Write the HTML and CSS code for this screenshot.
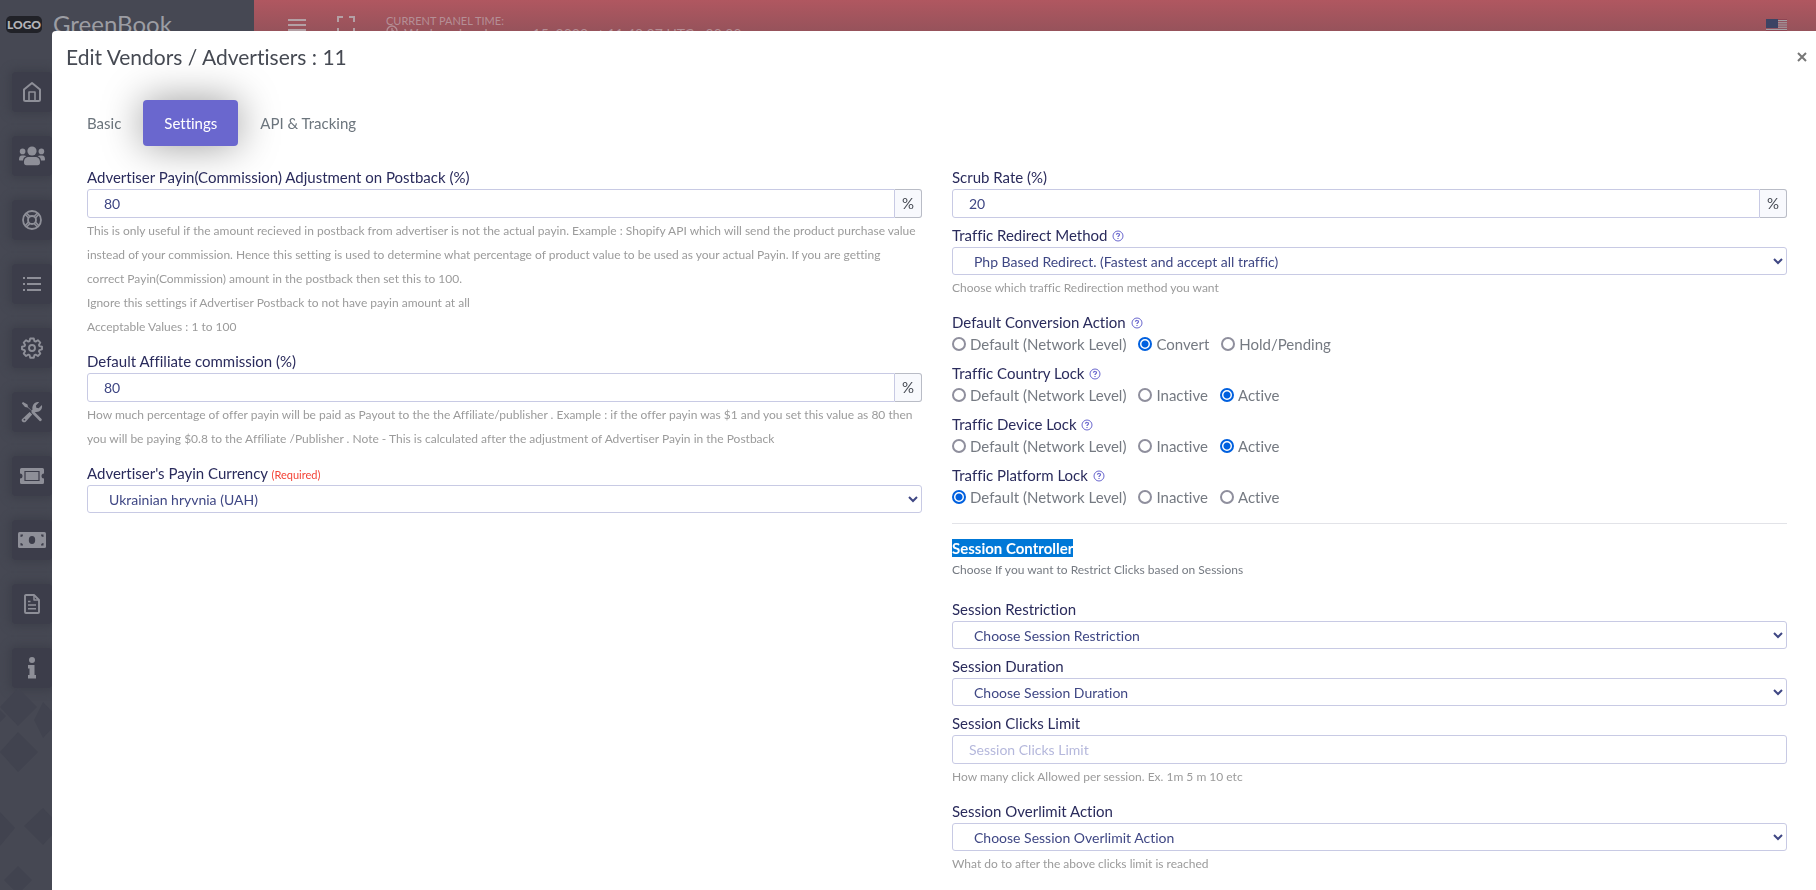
FILE: index.html
```html
<!DOCTYPE html>
<html lang="en">
<head>
<meta charset="utf-8">
<title>Edit Vendors / Advertisers</title>
<link rel="stylesheet" href="styles.css">
</head>
<body>
<div class="app">
  <aside class="sidebar">
    <svg class="pattern" width="52" height="300" viewBox="0 0 52 300" fill="#41434f" aria-hidden="true">
      <path d="M18 98 37 117 18 136 0 117zM18 142 38 162 18 182 0 162zM0 120 6 126 0 132zM0 222 15 238 0 256zM43 218 60 236 43 255 24 236zM18 276 32 290 18 304 4 290zM43 112 60 130 43 148 34 130z"/>
    </svg>
    <div class="brand"><span class="brand-badge">LOGO</span><span class="brand-name">GreenBook</span></div>
    <nav class="side-nav" aria-label="Main">
      <a class="tile" href="#" aria-label="Home"><svg width="20" height="22" viewBox="0 0 20 22" fill="none" stroke="currentColor" stroke-width="2" stroke-linejoin="round"><path d="M2 8.500 10 2l8 6.500V18.500a1.500 1.500 0 0 1-1.500 1.500h-13A1.500 1.500 0 0 1 2 18.500z"/><path d="M7 20v-9h6v9" stroke-width="1.600"/></svg></a>
      <a class="tile" href="#" aria-label="Users"><svg width="28" height="20" viewBox="0 0 28 20" fill="currentColor"><circle cx="14" cy="5" r="4.600"/><circle cx="4.600" cy="5.400" r="2.800"/><circle cx="23.400" cy="5.400" r="2.800"/><path d="M6 16.500C6 12.500 8 11 11 11h6c3 0 5 1.500 5 5.500 0 2-.8 2.700-2.500 2.700h-11C6.800 19.200 6 18.500 6 16.500zM1 13.500C1 11 2 9.500 4 9.500h2c1 0 1.800.3 2.300.8C6.200 11 5.200 12.500 5 14.500H2c-.7 0-1-.3-1-1zM27 13.500c0-2.500-1-4-3-4h-2c-1 0-1.800.3-2.300.8 2.100.7 3.100 2.200 3.300 4.200h3c.7 0 1-.3 1-1z"/></svg></a>
      <a class="tile" href="#" aria-label="Support"><svg width="22" height="22" viewBox="0 0 22 22" fill="none" stroke="currentColor" stroke-width="1.800"><circle cx="11" cy="11" r="9"/><circle cx="11" cy="11" r="4"/><path d="m4 5 3.500 4M5.500 4 9 7.500M18 5l-3.500 4M16.500 4 13 7.500M4 17l3.500-4M5.500 18 9 14.500M18 17l-3.500-4M16.500 18 13 14.500" stroke-width="1.500"/></svg></a>
      <a class="tile" href="#" aria-label="Lists"><svg width="18" height="14" viewBox="0 0 18 14" fill="currentColor"><path d="M0 0h2v2H0zM4 0h14v2H4zM0 6h2v2H0zM4 6h14v2H4zM0 12h2v2H0zM4 12h14v2H4z"/></svg></a>
      <a class="tile" href="#" aria-label="Settings"><svg width="22" height="22" viewBox="0 0 22 22" fill="none" stroke="currentColor" stroke-width="1.900" stroke-linejoin="round"><circle cx="11" cy="11" r="3"/><path d="M9.200 1.500h3.600l.6 2.600 1.200.5 2.300-1.400 2.400 2.400-1.400 2.300.5 1.200 2.600.6v2.600l-2.600.8-.5 1.200 1.400 2.300-2.400 2.400-2.300-1.400-1.200.5-.6 2.600H9.200l-.6-2.600-1.200-.5L5.100 19l-2.400-2.400 1.400-2.300-.5-1.200L1 12.300V9.700l2.600-.6.5-1.200-1.400-2.300 2.400-2.400 2.300 1.400 1.200-.5z"/></svg></a>
      <a class="tile" href="#" aria-label="Tools"><svg width="22" height="22" viewBox="0 0 22 22" fill="currentColor"><path d="M2 1 6.500 3.500 7 6l3.600 3.600 1.800.1 8.200 8.200c.8 1-.9 2.900-2 2l-8-8.200-.2-1.900L6.500 6.500 4 6 .8 2.200z"/><path d="M.9 18.200 8.600 11l2.600 2.500L4.500 21c-1.800 1.200-4.800-.8-3.600-2.800z"/><path d="M11.500 8.500c-.8-3.700 2-8.400 6.600-7.300L14.900 4.400l.4 2.400 2.400.4 3.200-3.200c1 4.400-2.500 7.600-6.400 6.900l-1.500 1-2.400-2.300z"/><circle cx="3.400" cy="18.600" r=".9" fill="#3c3d4a"/></svg></a>
      <a class="tile" href="#" aria-label="Offers"><svg width="24" height="16" viewBox="0 0 24 16"><path fill="currentColor" d="M1.500 0h21A1.500 1.500 0 0 1 24 1.500V5.500a2.500 2.500 0 0 0 0 5v4a1.500 1.500 0 0 1-1.500 1.500h-21A1.500 1.500 0 0 1 0 14.500v-4a2.500 2.500 0 0 0 0-5v-4A1.500 1.500 0 0 1 1.500 0z"/><path fill="none" stroke="#3c3d4a" stroke-width="1.200" d="M5 3.500h14v9H5z"/></svg></a>
      <a class="tile" href="#" aria-label="Payments"><svg width="28" height="16" viewBox="0 0 28 16"><rect width="28" height="16" rx="1.500" fill="currentColor"/><ellipse cx="14" cy="8" rx="3.200" ry="4" fill="#3c3d4a"/><path fill="#3c3d4a" d="M2.500 5V2.500H5A2.500 2.500 0 0 1 2.500 5zM25.500 5V2.500H23A2.500 2.500 0 0 0 25.500 5zM2.500 11v2.500H5A2.500 2.500 0 0 0 2.500 11zM25.500 11v2.500H23a2.500 2.500 0 0 1 2.500-2.500z"/></svg></a>
      <a class="tile" href="#" aria-label="Reports"><svg width="16" height="20" viewBox="0 0 16 20" fill="none" stroke="currentColor" stroke-width="1.900" stroke-linejoin="round"><path d="M2 1h8l5 5v12a1 1 0 0 1-1 1H2a1 1 0 0 1-1-1V2a1 1 0 0 1 1-1z"/><path d="M10 1v5h5M4 7.500h2.500M4 11h8M4 14.800h8" stroke-width="1.500"/></svg></a>
      <a class="tile" href="#" aria-label="Information"><svg width="10" height="22" viewBox="0 0 10 22" fill="currentColor"><circle cx="5" cy="3" r="3"/><path d="M1 8h6.500v10H9v3.500H1V18h1.500v-6.500H1z"/></svg></a>
    </nav>
  </aside>
  <header class="topbar">
    <button class="icon-btn" type="button" aria-label="Menu"><svg width="18" height="14" viewBox="0 0 18 14" fill="currentColor"><path d="M0 0h18v2H0zM0 5h18v2H0zM0 10h18v2H0z"/></svg></button>
    <button class="icon-btn" type="button" aria-label="Fullscreen"><svg width="18" height="18" viewBox="0 0 18 18" fill="none" stroke="currentColor" stroke-width="2"><path d="M1 6V1h5M12 1h5v5M17 12v5h-5M6 17H1v-5"/></svg></button>
    <div class="clock"><span>CURRENT PANEL TIME:</span><span class="clock-time"><svg width="12" height="12" viewBox="0 0 12 12" fill="none" stroke="currentColor" stroke-width="1.300"><circle cx="6" cy="6" r="5"/><path d="M6 3v3h2"/></svg>Wednesday, January 15, 2020 at 11:40:07 UTC +00:00</span></div>
    <svg class="flag" width="21" height="14" viewBox="0 0 21 14" role="img" aria-label="English (US)"><path fill="#a5a0a4" d="M0 0h21v14H0z"/><path stroke="#8e4452" stroke-width="1" d="M0 .5h21M0 2.700h21M0 4.900h21M0 7.100h21M0 9.300h21M0 11.500h21"/><path fill="#3c4464" d="M0 0h12v9H0z"/></svg>
  </header>
</div>

<div class="modal" role="dialog" aria-labelledby="modal-title">
  <div class="modal-head">
    <h1 class="modal-title" id="modal-title">Edit Vendors / Advertisers : 11</h1>
    <button class="close" type="button" aria-label="Close"><svg width="10" height="10" viewBox="0 0 10 10" stroke="currentColor" stroke-width="2"><path d="m1 1 8 8M9 1 1 9"/></svg></button>
  </div>
  <div class="tabs" role="tablist">
    <button class="tab" type="button" role="tab">Basic</button>
    <button class="tab tab-active" type="button" role="tab" aria-selected="true">Settings</button>
    <button class="tab" type="button" role="tab">API &amp; Tracking</button>
  </div>
  <form class="columns">
    <div class="column">
      <div class="field field-spaced">
        <label class="label" for="adjust">Advertiser Payin(Commission) Adjustment on Postback (%)</label>
        <div class="group"><input class="control" id="adjust" type="text" value="80"><span class="addon">%</span></div>
        <p class="hint">This is only useful if the amount recieved in postback from advertiser is not the actual payin. Example : Shopify API which will send the product purchase value<br>instead of your commission. Hence this setting is used to determine what percentage of product value to be used as your actual Payin. If you are getting<br>correct Payin(Commission) amount in the postback then set this to 100.<br>Ignore this settings if Advertiser Postback to not have payin amount at all<br>Acceptable Values : 1 to 100</p>
      </div>
      <div class="field field-spaced">
        <label class="label" for="commission">Default Affiliate commission (%)</label>
        <div class="group"><input class="control" id="commission" type="text" value="80"><span class="addon">%</span></div>
        <p class="hint">How much percentage of offer payin will be paid as Payout to the the Affiliate/publisher . Example : if the offer payin was $1 and you set this value as 80 then<br>you will be paying $0.8 to the Affiliate /Publisher . Note - This is calculated after the adjustment of Advertiser Payin in the Postback</p>
      </div>
      <div class="field">
        <label class="label" for="currency">Advertiser's Payin Currency <span class="required">(Required)</span></label>
        <select class="control select" id="currency"><option>Ukrainian hryvnia (UAH)</option></select>
      </div>
    </div>
    <div class="column">
      <div class="field">
        <label class="label" for="scrub">Scrub Rate (%)</label>
        <div class="group"><input class="control" id="scrub" type="text" value="20"><span class="addon">%</span></div>
      </div>
      <div class="field field-spaced">
        <label class="label" for="redirect">Traffic Redirect Method <svg class="help"><use href="#q"/></svg></label>
        <select class="control select" id="redirect"><option>Php Based Redirect. (Fastest and accept all traffic)</option></select>
        <p class="hint">Choose which traffic Redirection method you want</p>
      </div>
      <fieldset class="choices">
        <legend class="label">Default Conversion Action <svg class="help"><use href="#q"/></svg></legend>
        <div class="radios">
          <label class="radio"><input type="radio" name="conversion">Default (Network Level)</label>
          <label class="radio"><input type="radio" name="conversion" checked>Convert</label>
          <label class="radio"><input type="radio" name="conversion">Hold/Pending</label>
        </div>
      </fieldset>
      <fieldset class="choices">
        <legend class="label">Traffic Country Lock <svg class="help"><use href="#q"/></svg></legend>
        <div class="radios">
          <label class="radio"><input type="radio" name="country">Default (Network Level)</label>
          <label class="radio"><input type="radio" name="country">Inactive</label>
          <label class="radio"><input type="radio" name="country" checked>Active</label>
        </div>
      </fieldset>
      <fieldset class="choices">
        <legend class="label">Traffic Device Lock <svg class="help"><use href="#q"/></svg></legend>
        <div class="radios">
          <label class="radio"><input type="radio" name="device">Default (Network Level)</label>
          <label class="radio"><input type="radio" name="device">Inactive</label>
          <label class="radio"><input type="radio" name="device" checked>Active</label>
        </div>
      </fieldset>
      <fieldset class="choices">
        <legend class="label">Traffic Platform Lock <svg class="help"><use href="#q"/></svg></legend>
        <div class="radios">
          <label class="radio"><input type="radio" name="platform" checked>Default (Network Level)</label>
          <label class="radio"><input type="radio" name="platform">Inactive</label>
          <label class="radio"><input type="radio" name="platform">Active</label>
        </div>
      </fieldset>
      <section class="session">
        <h2 class="session-title"><mark>Session Controller</mark></h2>
        <p class="session-note">Choose If you want to Restrict Clicks based on Sessions</p>
        <div class="field">
          <label class="label" for="restriction">Session Restriction</label>
          <select class="control select" id="restriction"><option>Choose Session Restriction</option></select>
        </div>
        <div class="field">
          <label class="label" for="duration">Session Duration</label>
          <select class="control select" id="duration"><option>Choose Session Duration</option></select>
        </div>
        <div class="field field-spaced">
          <label class="label" for="clicks">Session Clicks Limit</label>
          <div class="group"><input class="control control-single" id="clicks" type="text" placeholder="Session Clicks Limit"></div>
          <p class="hint">How many click Allowed per session. Ex. 1m 5 m 10 etc</p>
        </div>
        <div class="field">
          <label class="label" for="overlimit">Session Overlimit Action</label>
          <select class="control select" id="overlimit"><option>Choose Session Overlimit Action</option></select>
          <p class="hint">What do to after the above clicks limit is reached</p>
        </div>
      </section>
    </div>
  </form>
</div>

<svg width="0" height="0" class="defs" aria-hidden="true">
  <symbol id="q" viewBox="0 0 12 12"><circle cx="6" cy="6" r="5" fill="none" stroke="currentColor"/><path d="M4.400 4.700C4.600 3 7.600 3.100 7.500 4.800 7.400 5.800 6 5.800 6 7.100" fill="none" stroke="currentColor" stroke-width="1.200"/><path d="M5.400 7.900h1.200V9H5.400z" fill="currentColor"/></symbol>
</svg>
</body>
</html>
```

FILE: styles.css
```css
* { box-sizing: border-box; }

body {
  margin: 0;
  min-height: 100vh;
  overflow: hidden;
  font-family: Lato, "Open Sans", sans-serif;
  font-size: 15px;
  font-variant-ligatures: none;
  line-height: 24px;
  color: #757575;
}

p, h1, h2 { margin: 0; }
button, input, select { font: inherit; font-variant-ligatures: none; }

.app {
  display: grid;
  grid-template-columns: 254px 1fr;
  min-height: 100vh;
}

.sidebar { position: relative; background: #464853; color: #9a9ba3; }
.pattern { position: absolute; left: 0; bottom: 0; }
.brand { display: flex; align-items: center; gap: 11px; height: 48px; padding-left: 6px; }
.brand-badge {
  width: 36px;
  height: 17px;
  border-radius: 5px;
  background: #212228;
  color: #b4b4b8;
  font: 900 12px/17px Lato, sans-serif;
  text-align: center;
}
.brand-name { font-size: 24px; color: #9c9da3; }
.side-nav { display: grid; gap: 24px; padding: 24px 12px; }
.tile {
  display: grid;
  place-items: center;
  width: 40px;
  height: 40px;
  border-radius: 4px;
  background: #3c3d4a;
  box-shadow: 0 0 8px 3px #3e404b;
  color: #8e8f98;
}

.topbar {
  display: flex;
  align-items: flex-start;
  height: 48px;
  padding: 16px 29px 0 34px;
  gap: 31px;
  background: linear-gradient(#b05760, #885058);
  color: #b4a0a5;
}
.icon-btn { display: flex; align-items: flex-start; padding: 0; border: 0; background: none; color: inherit; }
.icon-btn:first-child { padding-top: 3px; }
.clock { display: grid; font-size: 11px; line-height: 9px; color: #b58f96; }
.clock-time { display: flex; gap: 6px; font-size: 14px; line-height: 18px; }
.flag { margin: 3px 0 0 auto; }

.modal {
  position: fixed;
  inset: 31px 0 0 52px;
  overflow: hidden;
  border-radius: 4px 0 0 0;
  background: #fff;
}
.modal-head { display: flex; justify-content: space-between; align-items: center; height: 52px; padding: 0 9px 0 14px; }
.modal-title { font-size: 21px; font-weight: 400; color: #464a53; }
.close { display: flex; padding: 0; border: 0; background: none; color: #777; }

.tabs { display: flex; gap: 1px; padding: 17px 14px 19px; }
.tab { height: 46px; padding: 0 21px; border: 0; border-radius: 4px; background: none; color: #6c757d; }
.tab-active { background: #6a67ce; color: #fff; box-shadow: 0 0 40px rgba(0, 0, 0, .4); }

.columns { display: grid; grid-template-columns: 1fr 1fr; gap: 30px; padding: 0 29px 0 35px; }
.field { margin-bottom: 5px; }
.field-spaced { margin-bottom: 10px; }
.label { display: block; height: 24px; padding: 0; line-height: 24px; color: #2a2b5c; }
.required { font-size: 11px; color: #f44336; }
.help { width: 12px; height: 12px; margin-left: 1px; vertical-align: -1px; color: #6a67ce; }

.group { display: flex; }
.control {
  flex: 1;
  min-width: 0;
  height: 29px;
  padding: 0 16px;
  border: 1px solid #c8cae4;
  border-radius: 3px 0 0 3px;
  background: #fff;
  color: #3f4784;
  font-size: 14px;
}
.control-single { border-radius: 3px; }
.control::placeholder { color: #b5b8dc; opacity: 1; }
.select { display: block; width: 100%; height: 28px; padding: 0 0 0 17px; border-radius: 3px; }
.addon {
  width: 27px;
  border: 1px solid #b9bcc6;
  border-left: 0;
  border-radius: 0 3px 3px 0;
  background: #f8f9fd;
  color: #464a53;
  line-height: 27px;
  text-align: center;
}
.hint { margin-top: 1px; font-size: 12px; color: #9b9b9b; }

.choices { margin: 0 0 7px; padding: 0; border: 0; min-width: 0; }
.radios { display: flex; gap: 12px; }
.radio { display: flex; align-items: center; gap: 4px; height: 20px; color: #757a82; }
.radio input {
  appearance: none;
  width: 14px;
  height: 14px;
  margin: 0;
  border: 2px solid #8f8f9d;
  border-radius: 50%;
  background: #fff;
}
.radio input:checked { border-color: #0060df; background: radial-gradient(circle, #0060df 3px, #fff 4px); }

.session { margin-top: 16px; padding-top: 15px; border-top: 1px solid #e2e3e8; }
.session-title { height: 18px; font-size: 15px; line-height: 18px; font-weight: 700; }
.session-title mark { display: inline-block; background: #0078d7; color: #fff; }
.session-note { margin: 1px 0 15px; font-size: 12px; color: #757a82; }
.defs { position: absolute; }
```
